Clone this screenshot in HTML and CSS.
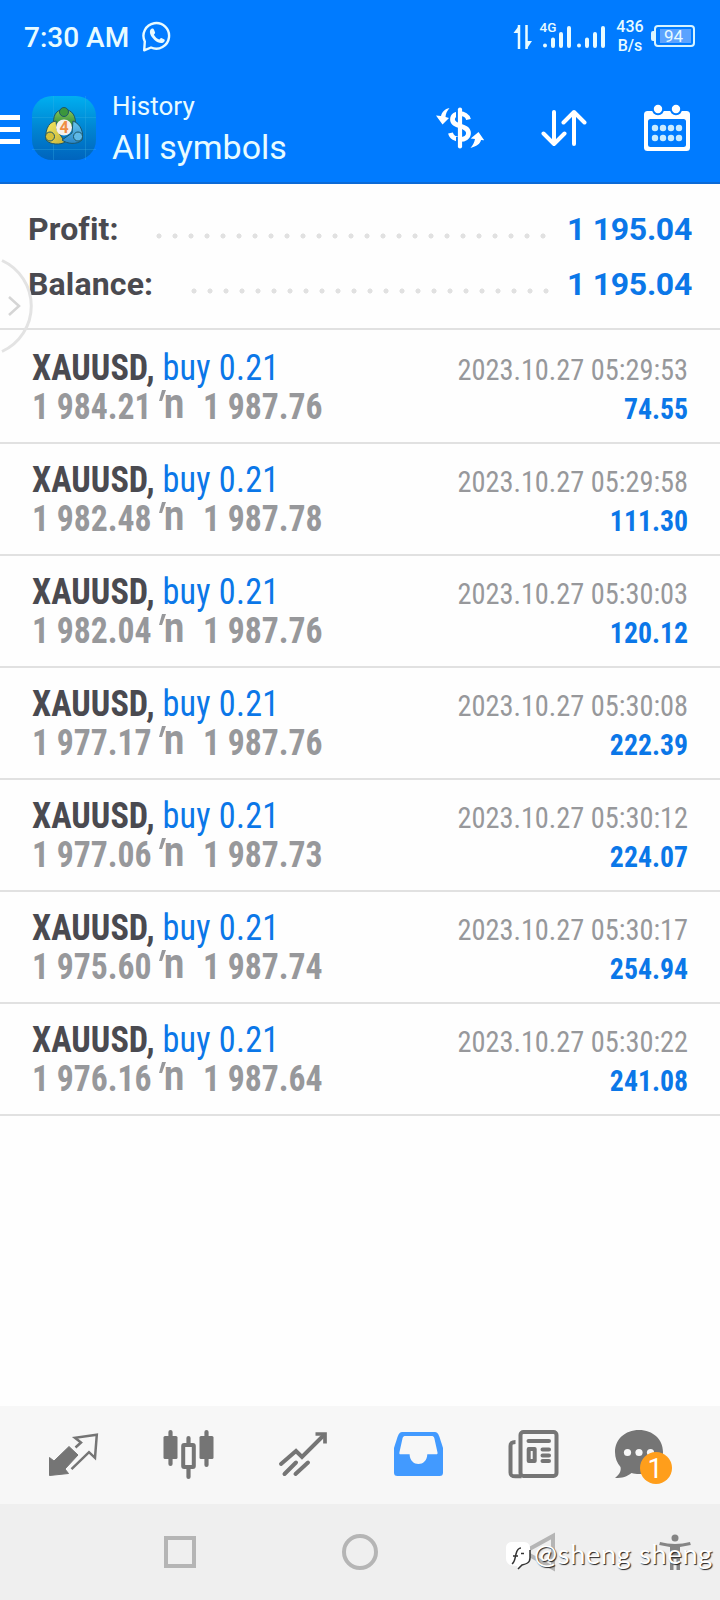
FILE: index.html
```html
<!DOCTYPE html>
<html lang="en">
<head>
<meta charset="utf-8">
<title>History</title>
<link rel="stylesheet" href="styles.css">
</head>
<body>
<div class="screen">
  <header class="top">
    <div class="status">
      <span class="clock">7:30 AM</span>
      <svg class="wa" width="30" height="32" viewBox="0 0 30 32"><path d="M2.200 29.300L2.800 20.500A12.800 12.800 0 1 1 9 26.500Z" fill="none" stroke="#e8fbff" stroke-width="2.400" stroke-linejoin="round"/><path d="M8.600 8.500c1.200-1.500 2.900-1 3.500.400l1 2.600c.200.700-.900 1.600-1.200 2.200 1.300 2.300 3 3.900 5.300 4.900.800-.400 1.500-1.700 2.200-1.500l3 1.500c.8.4.2 2.300-1 2.900-2.500 1.300-6 .1-9.200-2.800C8.600 15.200 6.800 11.200 8.600 8.500Z" fill="#e8fbff"/></svg>
      <svg class="signals" width="110" height="34" viewBox="510 18 110 34" fill="#e8fbff" stroke="#e8fbff"><path d="M519 25v24M526.500 25v24" fill="none" stroke-width="2.500"/><path d="M513.500 33l6-8v8zM526 41h6l-5 7.500z" stroke="none"/><g stroke-width="4" stroke-linecap="round"><path d="M545 45.500v.1M553 39.500v6.500M561 34v12M569 28v18M579 45.500v.1M587 39.500v6.500M595 34v12M603 28v18"/></g><text x="539.500" y="31.500" class="net">4G</text></svg>
      <div class="rate"><span>436</span><span>B/s</span></div>
      <div class="battery"><span>94</span></div>
    </div>
    <div class="bar">
      <svg class="burger" width="20" height="30"><path d="M0 2.500h20M0 14.500h20M0 26.500h20" stroke="#fff" stroke-width="5"/></svg>
      <svg class="logo" width="64" height="64" viewBox="0 0 64 64">
        <defs>
          <linearGradient id="sky" x1="0" y1="0" x2="0" y2="1"><stop offset="0" stop-color="#00aff0"/><stop offset=".5" stop-color="#0085d2"/><stop offset="1" stop-color="#0064bd"/></linearGradient>
          <linearGradient id="green" x1="0" y1="0" x2="0" y2="1"><stop offset="0" stop-color="#8cc95a"/><stop offset="1" stop-color="#278536"/></linearGradient>
          <linearGradient id="gold" x1="0" y1="0" x2="1" y2="1"><stop offset="0" stop-color="#f6ea62"/><stop offset="1" stop-color="#c5b23a"/></linearGradient>
          <linearGradient id="aqua" x1="0" y1="0" x2="0" y2="1"><stop offset="0" stop-color="#69c8ef"/><stop offset="1" stop-color="#2a86c8"/></linearGradient>
        </defs>
        <rect width="64" height="64" rx="20" fill="url(#sky)"/>
        <path d="M0 21.500h64M0 53.500h64M21.500 0v64M53.500 0v64" stroke="#38b4e6" stroke-opacity=".3"/>
        <g stroke="#1d5668">
          <path d="M22 31C20 20 24 13.500 32 13.500S45 20 43 31L32 31Z" fill="url(#green)"/>
          <path d="M24 25C15 26 13 37 14 44c4 5 15 5 19 2L25 34Z" fill="url(#gold)"/>
          <path d="M41 25c8 3 11 12 9 19-5 5-15 4-20 0l10-7Z" fill="url(#aqua)"/>
          <circle cx="32" cy="16" r="4.500" fill="#3c963d"/><circle cx="18" cy="40.500" r="4.500" fill="#d4c03b"/><circle cx="46" cy="40.500" r="4.500" fill="#5eb8e6"/>
        </g>
        <circle cx="32" cy="31.500" r="8" fill="#f5f0ea"/>
        <text x="32" y="37" class="four">4</text>
      </svg>
      <div class="titles"><span class="t1">History</span><span class="t2">All symbols</span></div>
      <div class="tools">
        <svg width="50" height="44" viewBox="435 106 50 44"><path d="M468.500 119.500C467 112 452.500 111.500 452.500 119.500c0 8 16 5 16 13.500 0 9-16.500 8-18 0" fill="none" stroke="#fff" stroke-width="4.800"/><path d="M457 108v11M457 137v11" stroke="#007bff" stroke-width="2"/><path d="M460 109.500v37" stroke="#fff" stroke-width="4.200" stroke-linecap="round"/><path d="M449.500 108c-5 1-7.500 4-8.500 8l-5-.5 6.500 9 6.500-6.500-3.500-1c.3-3.500 1.500-6 4-9ZM470.500 148c6-1.500 10-4.500 10.500-8l3.200.2-5.700-8.200-7.800 6.500 4.300.6c-.5 3-2 5.900-4.500 8.900Z" fill="#fff"/></svg>
        <svg width="46" height="38" viewBox="541 109 46 38"><path d="M554 112v32M543.500 133.500l10.500 10.500 10.500-10.500M574 144v-32M563.500 122.500l10.500-10.500 10.500 10.500" fill="none" stroke="#fff" stroke-width="4" stroke-linecap="round" stroke-linejoin="round"/></svg>
        <svg width="48" height="48" viewBox="643 103 48 48"><rect x="644" y="110" width="46" height="40" rx="3.500" fill="#fff"/><rect x="648" y="118" width="38" height="28" rx="2.500" fill="#007bff"/><g fill="#fff" stroke="#007bff" stroke-width="2"><circle cx="658" cy="108" r="5.200"/><circle cx="676" cy="108" r="5.200"/></g><path d="M655 127h0M663 127h0M671 127h0M679 127h0M655 137h0M663 137h0M671 137h0M679 137h0" stroke="#c9ebff" stroke-width="6.400" stroke-linecap="round"/></svg>
      </div>
    </div>
  </header>
  <section class="summary">
    <div class="line"><span class="key">Profit:</span><span class="dots d1"></span><span class="sum">1 195.04</span></div>
    <div class="line"><span class="key">Balance:</span><span class="dots d2"></span><span class="sum">1 195.04</span></div>
    <svg class="handle" width="36" height="98" viewBox="0 257 36 98" fill="none"><path d="M2 260.500A50 50 0 0 1 2 351.500" stroke="#e3e3e3" stroke-width="3"/><path d="M9 297l10 9-10 9" stroke="#d5d5d5" stroke-width="2.500"/></svg>
  </section>
  <main class="list" id="list"></main>
  <nav class="tabs">
    <svg viewBox="0 1406 720 98" width="720" height="98" fill="none" stroke="#757575">
      <path d="M49.500 1457.500l4.500 3.500 15-14.500 9 8.500-13 14 3.500 4.500-19 2z" fill="#757575" stroke-width="1"/>
      <path d="M75.500 1447.500l5.500-5-6-4.700 21.800-3-1.800 23-6-5.600-17.500 17" stroke-width="2.500"/>
      <g stroke-width="4.200" stroke-linecap="round"><path d="M170.500 1432v32M206.500 1432v33M188.500 1438v6M188.500 1469v8"/></g>
      <rect x="163.500" y="1436" width="14" height="23" rx="1.500" fill="#757575" stroke="none"/><rect x="199.500" y="1436" width="14" height="23" rx="1.500" fill="#757575" stroke="none"/><rect x="183.200" y="1445" width="10.600" height="22" rx="1" stroke-width="4"/>
      <path d="M281 1464l15-13 6 6 22-22M284.500 1474l11.500-11.500M295.500 1474l12.500-11.500" stroke-width="4" stroke-linecap="round"/><path d="M315.500 1434h9.500v9.500" stroke-width="3.700"/>
      <path d="M403 1432h31c3 0 4 1.200 5.500 5l3.500 11v24.500c0 2.500-1 3.500-3.500 3.500h-42c-2.500 0-3.500-1-3.500-3.500V1448l3.500-11c1.500-3.800 2.500-5 5.500-5Z" fill="#429aff" stroke="none"/>
      <path d="M405.500 1436h26c1.500 0 2.200.6 2.800 2l3.200 14.500c.3 1-.2 1.800-1 1.800h-9.200c-.3 13-17.400 13-17.700 0h-9.200c-.8 0-1.300-.8-1-1.800l3.200-14.500c.5-1.400 1.400-2 2.900-2Z" fill="#f7f7f7" stroke="none"/>
      <rect x="520.500" y="1432" width="36" height="44" rx="3" stroke-width="4"/><path d="M515.500 1442c-3.500 0-5 .7-5 4v26.500c0 3 1 3.800 5 3.800h6" stroke-width="4"/><path d="M528.500 1441h20.500M542.500 1449.500h6.500M542.500 1455.500h6.500M542.500 1461h6.500" stroke-width="4" stroke-linecap="round"/><rect x="528.700" y="1449" width="6" height="12" stroke-width="4" stroke-linejoin="round"/>
      <path d="M639 1430c14 0 24 9.500 24 22s-10 22-24 22c-2.700 0-5-.300-7.500-1-4.500 3.700-9 5-16.500 5 4-3 6.500-7 5.500-11-3.500-4-5.500-9-5.500-15 0-12.500 10-22 24-22Z" fill="#757575" stroke="none"/>
      <g fill="#f7f7f7" stroke="none"><circle cx="627.500" cy="1452.500" r="3.600"/><circle cx="639" cy="1452.500" r="3.600"/><circle cx="650.500" cy="1452.500" r="3.600"/></g>
      <circle cx="656" cy="1468" r="16" fill="#ff9e1b" stroke="none"/><text x="655" y="1478" class="badge">1</text>
    </svg>
  </nav>
  <footer class="system">
    <svg viewBox="0 1504 720 96" width="720" height="96" fill="none" stroke="#b5b5b5" stroke-width="4">
      <rect x="166" y="1538" width="28" height="28"/><circle cx="360" cy="1552" r="16"/><path d="M553 1536v32l-29-16z"/>
      <g fill="#858585" stroke="none"><circle cx="675" cy="1538" r="3.500"/><path d="M660 1542c10 2.500 20 2.500 30 0l.8 3-10.800 2v23h-3.500v-11h-3v11H670v-23l-10.800-2z"/></g>
    </svg>
    <div class="mark">
      <svg width="26" height="30" viewBox="0 0 26 30"><path d="M6 2h12c4 0 6 3 6 6v10c0 6-4 7-8 7l-4 4c-1-2-1-3-1-3-7 0-11-2-11-8V8c0-4 2-6 6-6Z" fill="#fff"/><path d="M6 24c3-2 3-6 4-10s2-6 5-6M7 16h5M15 13.500h3M24 10v8c0 5-4 6-8 7l-4 4" fill="none" stroke="#333" stroke-width="1.500"/></svg>
      <span>@sheng sheng</span>
    </div>
  </footer>
</div>
<script src="app.js"></script>
</body>
</html>
```
FILE: styles.css
```css
* { box-sizing: border-box; }
body { margin: 0; background: #fefefe; font-family: Roboto, "Liberation Sans", sans-serif; }
.screen { width: 720px; height: 1600px; display: flex; flex-direction: column; background: #fefefe; overflow: hidden; }
.top { height: 184px; background: #007bff; border-bottom: 2px solid #0b6ad6; color: #e8fbff; flex: none; }
.status { height: 74px; display: flex; align-items: center; padding-left: 24px; }
.clock { font-size: 28px; font-weight: 500; width: 118px; white-space: nowrap; }
.wa { margin-bottom: 1px; }
.signals { margin-left: 338px; margin-bottom: 4px; }
.net { font: 500 13.5px Roboto, sans-serif; stroke: none; }
.rate { width: 40px; margin-left: -10px; display: flex; flex-direction: column; text-align: center; font-size: 16px; font-weight: 500; line-height: 19px; margin-bottom: 2px; }
.battery { position: relative; width: 41px; height: 22px; margin-left: 4px; margin-bottom: 2px; border: 2px solid #d8f4ff; border-radius: 4px; padding: 2px 2px 2px 4px; }
.battery::before { content: ""; position: absolute; left: -5px; top: 4px; width: 3px; height: 10px; border-radius: 2px 0 0 2px; background: #d8f4ff; }
.battery span { display: block; height: 14px; background: #5ba3ff; font-size: 17px; line-height: 15px; text-align: center; padding-right: 4px; }
.bar { display: flex; height: 108px; }
.burger { margin-top: 41px; }
.logo { margin: 22px 0 0 12px; }
.four { font: 700 16px Roboto, sans-serif; fill: #ef8d43; text-anchor: middle; }
.titles { width: 190px; margin-left: 16px; padding-top: 16px; display: flex; flex-direction: column; white-space: nowrap; }
.t1 { font-size: 26px; line-height: 32px; }
.t2 { font-size: 34px; line-height: 40px; margin-top: 5px; }
.tools { margin-left: 133px; width: 256px; display: flex; justify-content: space-between; align-items: center; height: 108px; }
.tools svg { flex: none; }
.summary { height: 146px; flex: none; border-bottom: 2px solid #e1e1e1; padding: 18px 28px 0; position: relative; }
.line { height: 55px; display: flex; line-height: 54px; font-size: 32px; }
.key { color: #4a4a50; font-weight: 700; letter-spacing: .15px; white-space: nowrap; }
.sum { color: #0b77e8; font-weight: 700; letter-spacing: -.3px; margin-left: auto; white-space: nowrap; }
.dots { position: absolute; height: 6px; background: radial-gradient(circle at 8px 3px, #e1e1e1 2.200px, transparent 2.900px) 0 0 / 16px 6px; }
.d1 { left: 151px; top: 49px; width: 400px; }
.d2 { left: 186px; top: 104px; width: 368px; }
.handle { position: absolute; left: 0; top: 73px; width: 36px; }
.list { flex: 1; padding-top: 2px; }
.row { height: 112px; border-bottom: 2px solid #e1e1e1; padding: 16px 32px 0; display: flex; justify-content: space-between; font-family: "Roboto Condensed", Roboto, sans-serif; font-stretch: 75%; white-space: nowrap; }
.left { font-size: 37px; line-height: 39px; }
.deal { transform: scaleX(.925); transform-origin: left; }
.right { font-size: 30px; line-height: 39px; text-align: right; padding-top: 2px; color: #97989b; }
.date { transform: scaleX(.945); transform-origin: right; }
.symbol { color: #4a4a50; font-weight: 700; }
.side { color: #0b77e8; letter-spacing: .25px; }
.prices { color: #97989b; font-weight: 700; display: grid; grid-template-columns: 125px 46px 130px; }
.open, .close { transform: scaleX(.91); transform-origin: left; }
.mid { display: flex; height: 39px; }
.tick { width: 7px; height: 11px; margin: 3px 0 0 2px; flex: none; }
.n { font: 700 42px/34px Roboto, sans-serif; height: 34px; margin-left: -2px; transform: scaleX(.86); transform-origin: left; }
.gain { color: #0b77e8; font-weight: 700; transform: scaleX(.925); transform-origin: right; }
.tabs { height: 98px; flex: none; background: #f7f7f7; }
.tabs svg, .system svg { display: block; }
.badge { font: 27px Roboto, sans-serif; fill: #fff; stroke: none; text-anchor: middle; }
.system { height: 96px; flex: none; background: #efefef; position: relative; }
.mark { position: absolute; left: 506px; top: 36px; display: flex; color: #fff; font: 27.5px/28px Lato, sans-serif; text-shadow: 1px 1px 1px #222; white-space: nowrap; }
.mark span { margin-left: 2px; letter-spacing: .5px; }
```
FILE: app.js
```js
const deals = [
  ["1 984.21", "1 987.76", "05:29:53", "74.55"],
  ["1 982.48", "1 987.78", "05:29:58", "111.30"],
  ["1 982.04", "1 987.76", "05:30:03", "120.12"],
  ["1 977.17", "1 987.76", "05:30:08", "222.39"],
  ["1 977.06", "1 987.73", "05:30:12", "224.07"],
  ["1 975.60", "1 987.74", "05:30:17", "254.94"],
  ["1 976.16", "1 987.64", "05:30:22", "241.08"]
];
document.getElementById("list").innerHTML = deals.map(([open, close, time, gain]) => `
  <article class="row">
    <div class="left">
      <div class="deal"><span class="symbol">XAUUSD,</span> <span class="side">buy 0.21</span></div>
      <div class="prices"><span class="open">${open}</span><span class="mid"><svg class="tick" viewBox="0 0 7 11"><path d="M3 0h4L3 11H0z" fill="#97989b"/></svg><span class="n">n</span></span><span class="close">${close}</span></div>
    </div>
    <div class="right"><div class="date">2023.10.27 ${time}</div><div class="gain">${gain}</div></div>
  </article>`).join("");
```
